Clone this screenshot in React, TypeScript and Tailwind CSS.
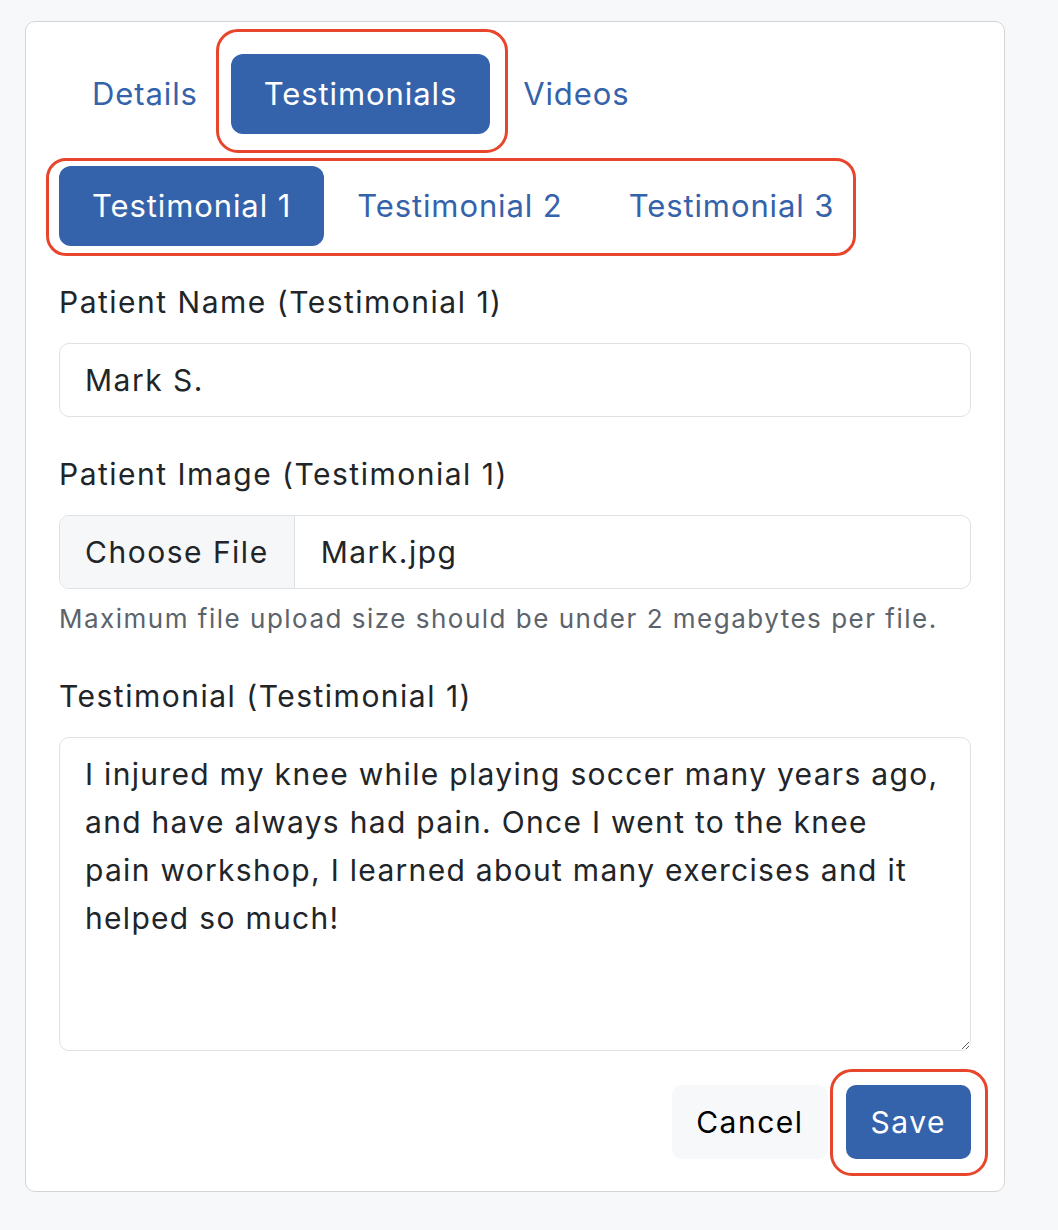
export default function App() {
  const font = { fontFamily: 'Inter, "Noto Sans", sans-serif' }

  return (
    <div className="min-h-screen bg-[#f7f8fa] pt-[21px] pl-[25px] text-[#212529]" style={font}>
      <div className="w-[980px] rounded-[10px] border border-[#d4d5d7] bg-white px-[33px] pt-[32px] pb-[32px]">
        {/* Main tabs */}
        <div className="relative flex h-[80px] items-center">
          <a className="flex h-[80px] items-center px-[33px] text-[31px] tracking-[0.9px] text-[#3563ab]">Details</a>
          <a className="flex h-[80px] items-center rounded-[12px] bg-[#3563ab] px-[33px] text-[31px] tracking-[0.9px] text-white">
            Testimonials
          </a>
          <a className="flex h-[80px] items-center px-[33px] text-[31px] tracking-[0.9px] text-[#3563ab]">Videos</a>
          <div className="pointer-events-none absolute left-[157px] top-[-25px] h-[124px] w-[292px] rounded-[22px] border-[3px] border-[#e8462c]" />
        </div>

        {/* Sub tabs */}
        <div className="relative mt-[32px] flex h-[80px] items-center">
          <a className="flex h-[80px] items-center rounded-[12px] bg-[#3563ab] px-[33px] text-[31px] tracking-[0.9px] text-white">
            Testimonial 1
          </a>
          <a className="flex h-[80px] items-center px-[33px] text-[31px] tracking-[0.9px] text-[#3563ab]">Testimonial 2</a>
          <a className="flex h-[80px] items-center px-[33px] text-[31px] tracking-[0.9px] text-[#3563ab]">Testimonial 3</a>
          <div className="pointer-events-none absolute left-[-13px] top-[-8px] h-[98px] w-[810px] rounded-[20px] border-[3px] border-[#e8462c]" />
        </div>

        {/* Patient name */}
        <label className="mt-[35px] block text-[30px] leading-[42px] tracking-[1.5px]">Patient Name (Testimonial 1)</label>
        <div className="mt-[20px] flex h-[74px] items-center rounded-[10px] border border-[#dee2e6] px-[25px] text-[30px] tracking-[1.5px]">
          Mark S.
        </div>

        {/* Patient image */}
        <label className="mt-[36px] block text-[30px] leading-[42px] tracking-[1.5px]">Patient Image (Testimonial 1)</label>
        <div className="mt-[20px] flex h-[74px] overflow-hidden rounded-[10px] border border-[#dee2e6] text-[30px] tracking-[1.5px]">
          <div className="flex items-center border-r border-[#dee2e6] bg-[#f6f7f9] px-[25px]">Choose File</div>
          <div className="flex items-center px-[26px]">Mark.jpg</div>
        </div>
        <p className="mt-[12px] text-[26px] leading-[36px] tracking-[1.5px] text-[#5c636a]">
          Maximum file upload size should be under 2 megabytes per file.
        </p>

        {/* Testimonial */}
        <label className="mt-[38px] block text-[30px] leading-[42px] tracking-[1.5px]">Testimonial (Testimonial 1)</label>
        <textarea
          className="mt-[20px] block h-[314px] w-full resize-y rounded-[10px] border border-[#dee2e6] px-[25px] pt-[12px] pb-[14px] text-[30px] leading-[48px] tracking-[1.3px] text-[#212529] outline-none"
          style={font}
          defaultValue={'I injured my knee while playing soccer many years ago, and have always had pain. Once I went to the knee pain\u00a0workshop, I learned about many exercises and it helped so much!'}
        />

        {/* Actions */}
        <div className="mt-[34px] flex justify-end gap-[18px]">
          <button className="h-[74px] rounded-[10px] bg-[#f7f8fa] px-[24px] text-[30px] tracking-[1.5px] text-black">Cancel</button>
          <div className="relative">
            <button className="h-[74px] rounded-[10px] bg-[#3563ab] px-[25px] text-[30px] tracking-[1.5px] text-white">Save</button>
            <div className="pointer-events-none absolute left-[-16px] top-[-16px] h-[107px] w-[158px] rounded-[22px] border-[3px] border-[#e8462c]" />
          </div>
        </div>
      </div>
    </div>
  )
}
